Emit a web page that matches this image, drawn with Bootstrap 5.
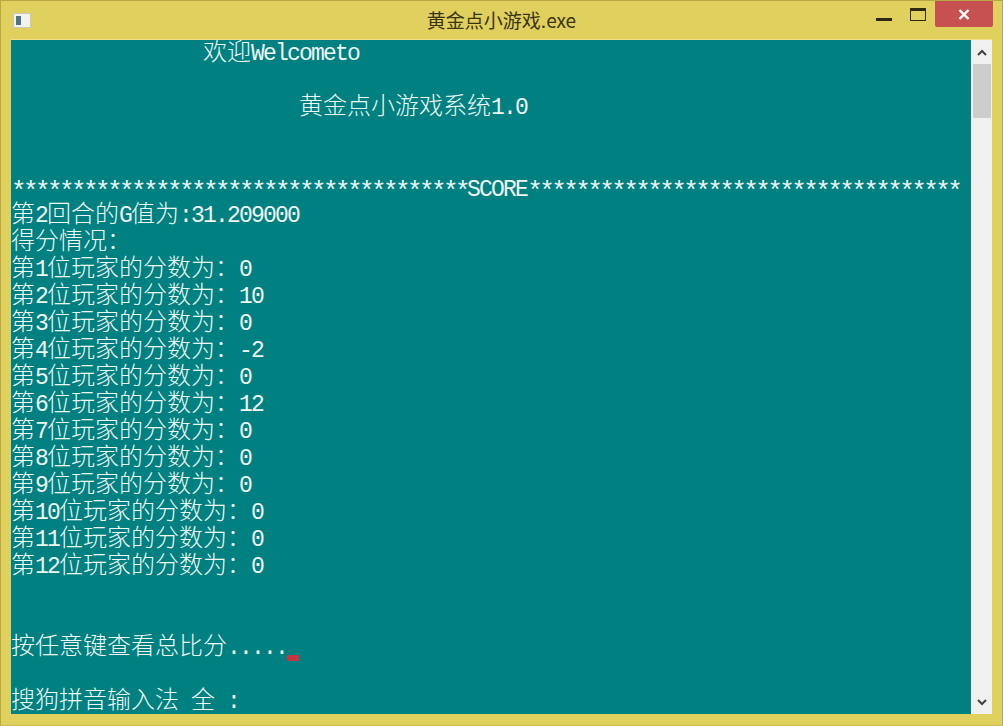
<!DOCTYPE html>
<html lang="zh-CN">
<head>
<meta charset="utf-8">
<title>黄金点小游戏.exe</title>
<link href="https://cdn.jsdelivr.net/npm/bootstrap@5.3.0/dist/css/bootstrap.min.css" rel="stylesheet">
<style>
html, body { height: 100%; }
body { background: #e0d05e; overflow: hidden; }
.win-frame { width: 1003px; height: 726px; background: #e0d05e; border: 1px solid #b5a845; border-bottom-color: #c9bb52; }
.win-titlebar { height: 38px; }
.win-side { flex: 1 1 0; }
.win-appicon { width: 18px; height: 15px; margin: 12px 0 0 12px; background: #f2f2ee; border: 1px solid #c8c8b8; padding: 2px 9px 2px 2px; }
.win-appicon i { display: block; width: 100%; height: 100%; background: #4f7480; }
.win-title { font-family: "Noto Sans CJK SC", "Liberation Sans", sans-serif; font-size: 19px; line-height: 38px; color: #3a3416; }
.win-btn-min { width: 34px; height: 25px; padding: 17px 9px 0; }
.win-btn-min i { display: block; height: 3px; background: #2e2a12; width: 16px; }
.win-btn-max { width: 34px; height: 25px; padding: 7px 8px 0 9px; }
.win-btn-max i { display: block; width: 16px; height: 13px; border: 1px solid #2e2a12; border-top-width: 3px; }
.win-btn-close { width: 58px; height: 26px; margin-right: 9px; background: #c75050; border-radius: 0 0 2px 2px; }
.win-client { height: 675px; margin: 0 10px; border-top: 1px solid #efe088; }
.con-screen { width: 960px; background: #008080; color: #eef7f4; font-family: "Liberation Mono", monospace; font-size: 23px; letter-spacing: -1.8px; }
.con-row { height: 27px; line-height: 21px; white-space: pre; }
.con-row-score { line-height: 31px; }
.han { font-family: "Noto Sans CJK SC", sans-serif; font-size: 24px; letter-spacing: 0; font-weight: 300; line-height: 19px; }
.con-star { font-size: 26px; letter-spacing: -3.6px; vertical-align: -3px; line-height: 19px; }
.con-caret { display: inline-block; width: 12px; height: 6px; background: #c8353f; vertical-align: -7px; }
.sb-track { width: 21px; background: #f0f0f0; border-left: 1px solid #fafafa; }
.sb-arrow { height: 24px; }
.sb-thumb { height: 54px; background: #cdcdcd; margin: 0 1px; }
</style>
</head>
<body>
<div class="win-frame d-flex flex-column">
  <div class="win-titlebar d-flex">
    <div class="win-side d-flex"><div class="win-appicon"><i></i></div></div>
    <div class="win-title">黄金点小游戏.exe</div>
    <div class="win-side d-flex justify-content-end align-items-start">
      <div class="win-btn-min"><i></i></div>
      <div class="win-btn-max"><i></i></div>
      <div class="win-btn-close d-flex align-items-center justify-content-center">
        <svg width="12" height="11" viewBox="0 0 12 11"><path d="M1.5 1 L10.5 10 M10.5 1 L1.5 10" stroke="#fff" stroke-width="2.4" fill="none"/></svg>
      </div>
    </div>
  </div>
  <div class="win-client d-flex">
    <div class="con-screen">
<div class="con-row">                <span class="han">欢迎</span>Welcometo</div>
<div class="con-row"> </div>
<div class="con-row">                        <span class="han">黄金点小游戏系统</span>1.0</div>
<div class="con-row"> </div>
<div class="con-row"> </div>
<div class="con-row con-row-score"><span class="con-star">**************************************</span>SCORE<span class="con-star">************************************</span></div>
<div class="con-row"><span class="han">第</span>2<span class="han">回合的</span>G<span class="han">值为</span>:31.209000</div>
<div class="con-row"><span class="han">得分情况：</span></div>
<div class="con-row"><span class="han">第</span>1<span class="han">位玩家的分数为：</span>0</div>
<div class="con-row"><span class="han">第</span>2<span class="han">位玩家的分数为：</span>10</div>
<div class="con-row"><span class="han">第</span>3<span class="han">位玩家的分数为：</span>0</div>
<div class="con-row"><span class="han">第</span>4<span class="han">位玩家的分数为：</span>-2</div>
<div class="con-row"><span class="han">第</span>5<span class="han">位玩家的分数为：</span>0</div>
<div class="con-row"><span class="han">第</span>6<span class="han">位玩家的分数为：</span>12</div>
<div class="con-row"><span class="han">第</span>7<span class="han">位玩家的分数为：</span>0</div>
<div class="con-row"><span class="han">第</span>8<span class="han">位玩家的分数为：</span>0</div>
<div class="con-row"><span class="han">第</span>9<span class="han">位玩家的分数为：</span>0</div>
<div class="con-row"><span class="han">第</span>10<span class="han">位玩家的分数为：</span>0</div>
<div class="con-row"><span class="han">第</span>11<span class="han">位玩家的分数为：</span>0</div>
<div class="con-row"><span class="han">第</span>12<span class="han">位玩家的分数为：</span>0</div>
<div class="con-row"> </div>
<div class="con-row"> </div>
<div class="con-row"><span class="han">按任意键查看总比分</span>.....<span class="con-caret"></span></div>
<div class="con-row"> </div>
<div class="con-row"><span class="han">搜狗拼音输入法</span> <span class="han">全</span> :</div>
    </div>
    <div class="sb-track d-flex flex-column">
      <div class="sb-arrow d-flex align-items-center justify-content-center">
        <svg width="10" height="7" viewBox="0 0 10 7"><path d="M1 6 L5 2 L9 6" stroke="#404040" stroke-width="2" fill="none"/></svg>
      </div>
      <div class="sb-thumb"></div>
      <div class="flex-grow-1"></div>
      <div class="sb-arrow d-flex align-items-center justify-content-center">
        <svg width="10" height="7" viewBox="0 0 10 7"><path d="M1 1 L5 5 L9 1" stroke="#404040" stroke-width="2" fill="none"/></svg>
      </div>
    </div>
  </div>
</div>
<script src="https://cdn.jsdelivr.net/npm/bootstrap@5.3.0/dist/js/bootstrap.bundle.min.js"></script>
</body>
</html>
